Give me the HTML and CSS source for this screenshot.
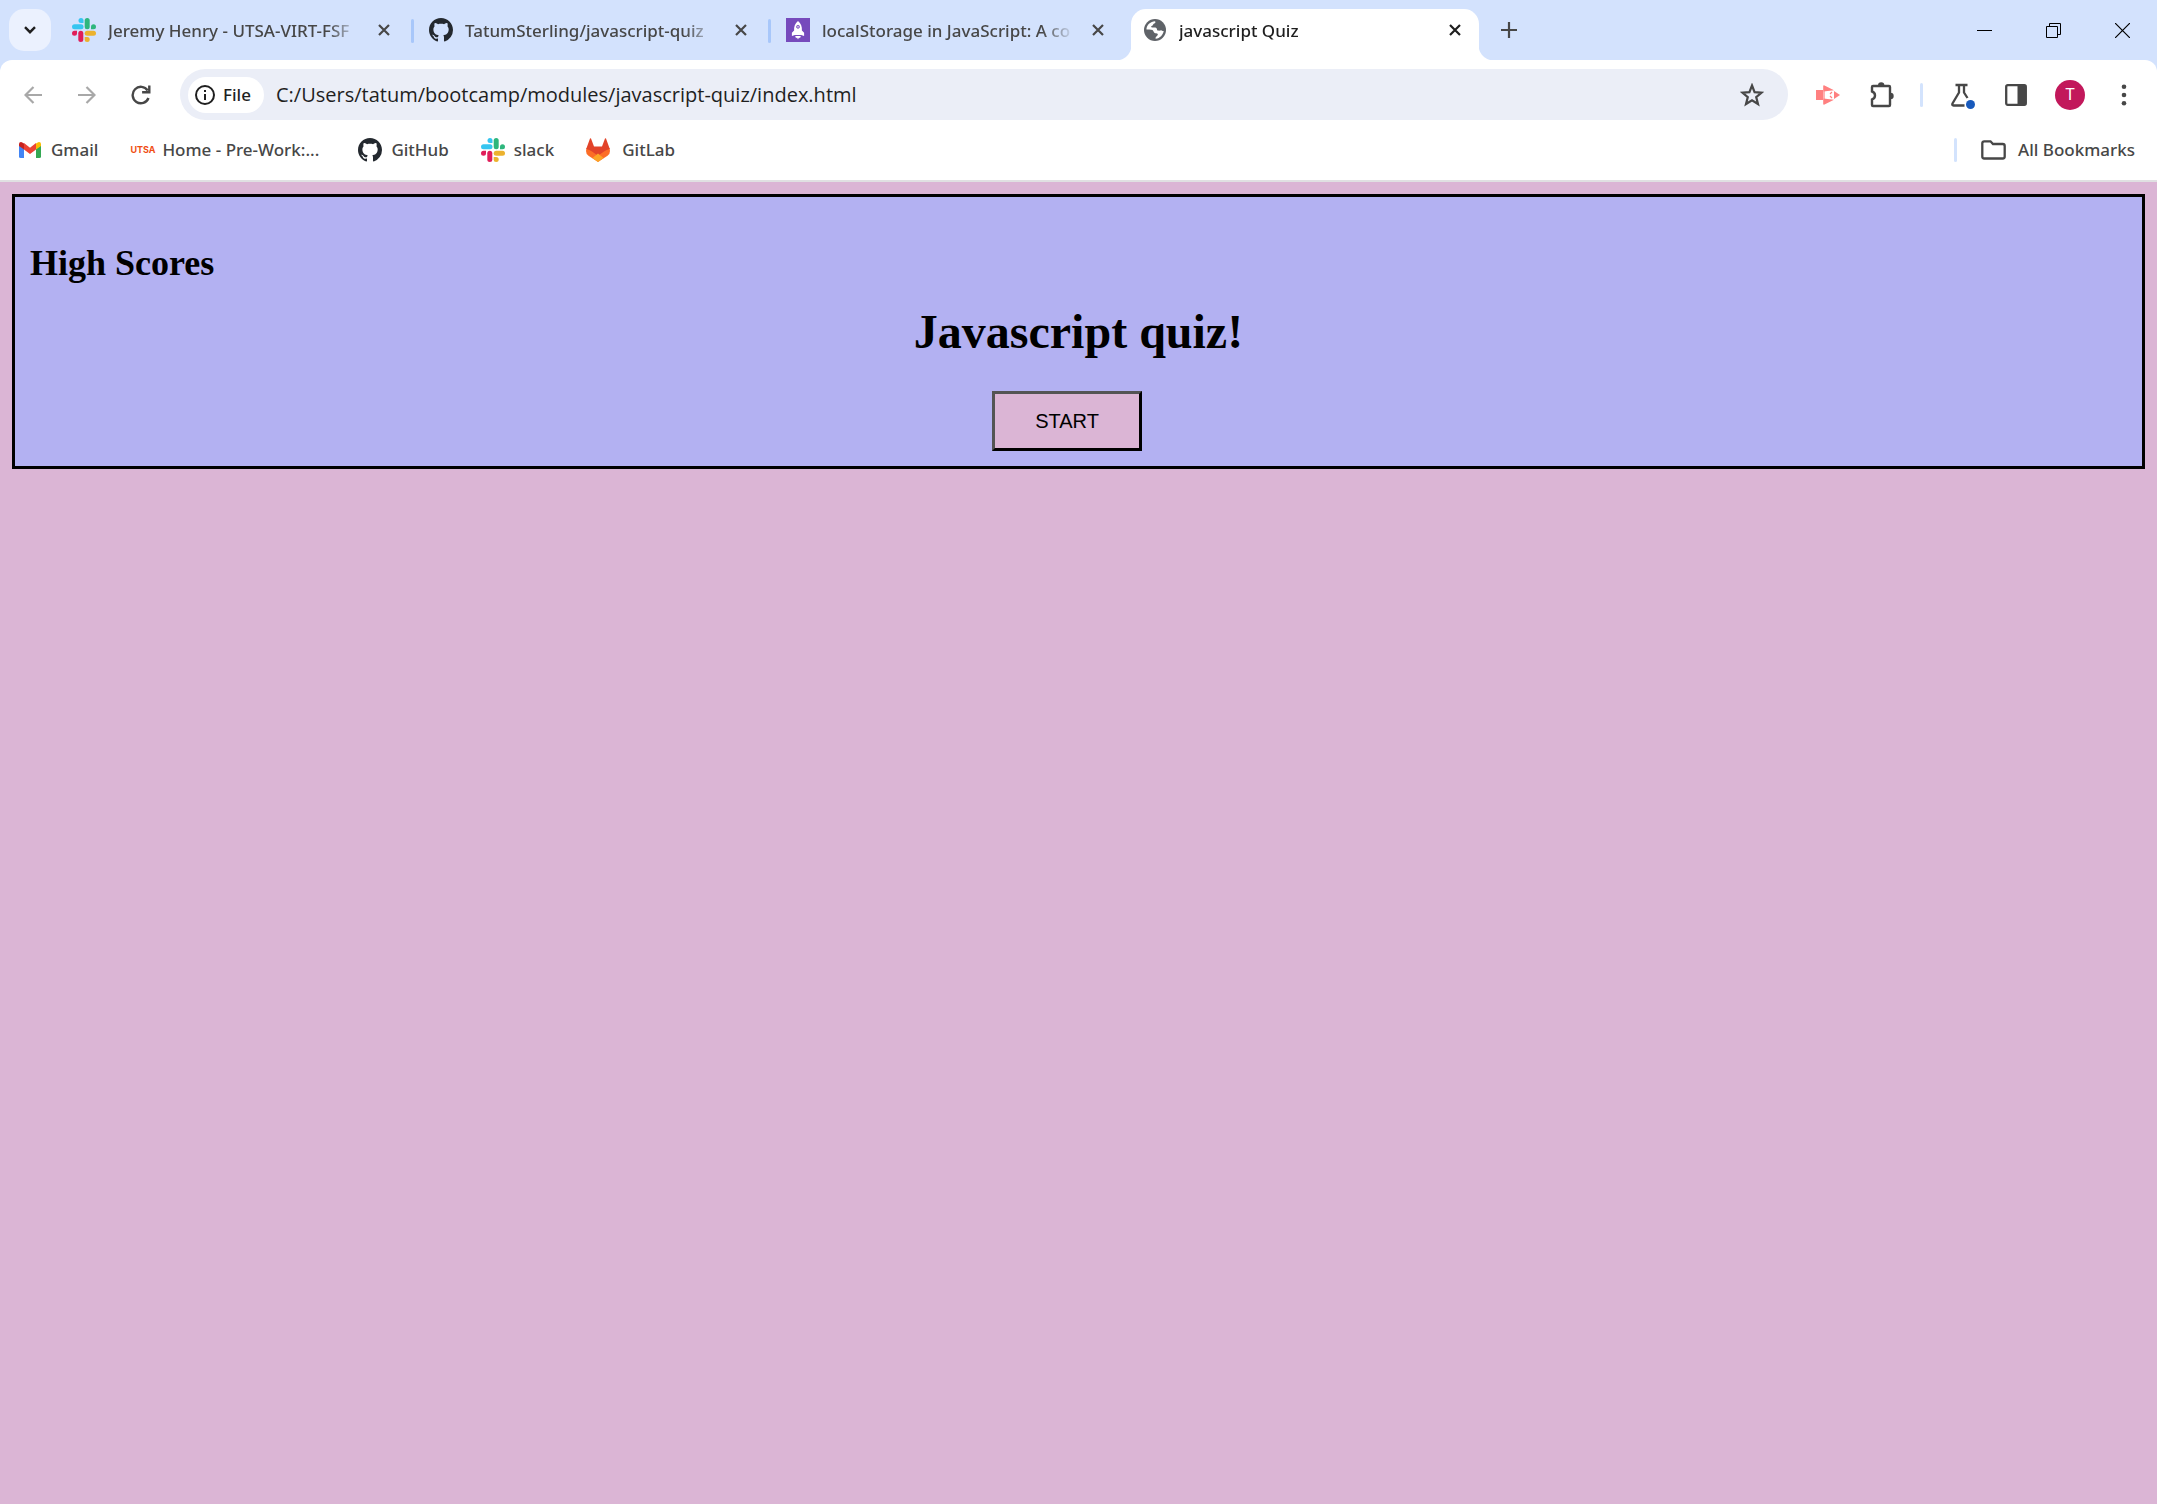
FILE: index.html
```html
<!DOCTYPE html>
<html lang="en">
<head>
<meta charset="utf-8">
<title>javascript Quiz</title>
<link rel="stylesheet" href="styles.css">
</head>
<body>
<svg class="defs" aria-hidden="true">
  <symbol id="close" viewBox="0 0 12 12"><path d="M1 1l10 10M11 1L1 11" fill="none" stroke="currentColor" stroke-width="2.2"/></symbol>
  <symbol id="slack" viewBox="0 0 24 24">
    <g fill="#36c5f0"><path d="M9 0a2.500 2.500 0 0 1 2.500 2.500V5H9a2.500 2.500 0 0 1 0-5z"/><rect x="0" y="6.300" width="11.500" height="5" rx="2.500"/></g>
    <g fill="#2eb67d"><rect x="12.700" y="0" width="5" height="11.300" rx="2.500"/><path d="M24 8.800a2.500 2.500 0 0 1-2.500 2.500H19V8.800a2.500 2.500 0 0 1 5 0z"/></g>
    <g fill="#ecb22e"><rect x="12.700" y="12.700" width="11.300" height="5" rx="2.500"/><path d="M15.200 24a2.500 2.500 0 0 1-2.500-2.500V19h2.500a2.500 2.500 0 0 1 0 5z"/></g>
    <g fill="#e01e5a"><rect x="6.300" y="12.700" width="5" height="11.300" rx="2.500"/><path d="M0 15.200a2.500 2.500 0 0 1 2.500-2.500H5v2.500a2.500 2.500 0 0 1-5 0z"/></g>
  </symbol>
  <symbol id="github" viewBox="0 0 16 16"><path fill="#24292f" d="M8 0C3.580 0 0 3.580 0 8c0 3.540 2.290 6.530 5.470 7.590.4.070.55-.17.55-.38 0-.19-.01-.82-.01-1.490-2.010.37-2.530-.49-2.690-.94-.09-.23-.48-.94-.82-1.130-.28-.15-.68-.52-.01-.53.63-.01 1.080.58 1.230.82.72 1.210 1.870.87 2.330.66.07-.52.28-.87.51-1.070-1.780-.2-3.640-.89-3.640-3.950 0-.87.31-1.590.82-2.150-.08-.2-.36-1.020.08-2.120 0 0 .67-.21 2.200.82.64-.18 1.320-.27 2-.27s1.360.09 2 .27c1.530-1.040 2.200-.82 2.200-.82.44 1.100.16 1.920.08 2.120.51.56.82 1.270.82 2.150 0 3.070-1.870 3.750-3.650 3.950.29.25.54.73.54 1.480 0 1.070-.01 1.930-.01 2.200 0 .21.15.46.55.38A8.010 8.010 0 0 0 16 8c0-4.420-3.580-8-8-8z"/></symbol>
</svg>

<header class="browser">
  <div class="tabstrip">
    <button class="tab-search" aria-label="Search tabs"><svg width="12" height="8" viewBox="0 0 12 8"><path d="M1 1.200l5 5 5-5" fill="none" stroke="#1f1f1f" stroke-width="2.400"/></svg></button>
    <nav class="tabs" aria-label="Tabs">
      <div class="tab">
        <svg class="favicon"><use href="#slack"/></svg>
        <a class="tab-title" href="#">Jeremy Henry - UTSA-VIRT-FSF</a>
        <button class="tab-close" aria-label="Close tab"><svg width="12" height="12"><use href="#close"/></svg></button>
      </div>
      <div class="tab divided">
        <svg class="favicon"><use href="#github"/></svg>
        <a class="tab-title" href="#">TatumSterling/javascript-quiz</a>
        <button class="tab-close" aria-label="Close tab"><svg width="12" height="12"><use href="#close"/></svg></button>
      </div>
      <div class="tab divided">
        <svg class="favicon" viewBox="0 0 24 24"><path fill="#764abc" d="M0 0h24v24H0z"/><path fill="#fff" d="M12 3c3 2.500 4.200 5.500 3.900 9.500l2.200 2.300v3.200l-3-1.100H8.900L5.900 18v-3.200l2.200-2.300C7.800 8.500 9 5.500 12 3zM9.200 18h5.600L14 20.200l-1-.8-1 2-1-2-1 .8z"/><circle cx="12" cy="8.800" r="1.500" fill="#c3aee3" stroke="#764abc" stroke-width=".8"/></svg>
        <a class="tab-title" href="#">localStorage in JavaScript: A co</a>
        <button class="tab-close" aria-label="Close tab"><svg width="12" height="12"><use href="#close"/></svg></button>
      </div>
      <div class="tab active">
        <svg class="favicon" viewBox="0 0 24 24"><circle cx="12" cy="12" r="11" fill="#5f6368"/><path fill="#fff" d="M3.500 10.500C4.200 6.500 7.500 3.500 12 3.200c1 .9.300 1.900-.9 2.300-1.300.5-.5 1.700-2 2.200-1.400.5-1.300 1.700.2 1.800 2 .1 3.600-.6 4.400.9.500 1.100.2 1.900 1.500 2.200 1.500.3 2.300-.4 3.300-.2 1.200.2 1.500.9 2.200.6C20 17 17 20.200 12.800 20.800c-.6-.9-.2-1.500.4-2.100 1-.9 1.700-1.200 1.600-2.400-.1-1-1.300-.9-2.600-1-1.500-.1-1.300-2.200-2.700-3.200-1.500-1-4-.6-6-.6z"/></svg>
        <a class="tab-title" href="#">javascript Quiz</a>
        <button class="tab-close" aria-label="Close tab"><svg width="12" height="12"><use href="#close"/></svg></button>
      </div>
    </nav>
    <button class="icon-button" aria-label="New tab"><svg width="16" height="16" viewBox="0 0 16 16"><path d="M8 0v16M0 8h16" stroke="#474747" stroke-width="2.200"/></svg></button>
    <div class="window-controls">
      <button aria-label="Minimize"><svg width="15" height="15"><path d="M0 7h15v1H0z"/></svg></button>
      <button aria-label="Restore"><svg width="15" height="15" fill="none" stroke="#000"><path d="M.5 3.500h11v11H.5zM3.500 3.500v-3h11v11h-3"/></svg></button>
      <button aria-label="Close"><svg width="15" height="15"><path d="M0 0l15 15M15 0L0 15" stroke="#000" stroke-width="1.200"/></svg></button>
    </div>
  </div>

  <div class="toolbar">
    <button class="icon-button" aria-label="Back"><svg width="18" height="18" viewBox="0 0 18 18" fill="none" stroke="#a8a8a8" stroke-width="2.200"><path d="M18 9H2M9.500 1L1.500 9l8 8"/></svg></button>
    <button class="icon-button" aria-label="Forward"><svg width="18" height="18" viewBox="0 0 18 18" fill="none" stroke="#a8a8a8" stroke-width="2.200"><path d="M0 9h16M8.500 1l8 8-8 8"/></svg></button>
    <button class="icon-button" aria-label="Reload"><svg width="20" height="20" viewBox="0 0 20 20" fill="none" stroke="#474747" stroke-width="2.400"><path d="M17.500 13a8.200 8.200 0 1 1-.8-7.500M18.300 .5v6.800h-7.200"/></svg></button>
    <div class="address">
      <button class="chip"><svg width="20" height="20" viewBox="0 0 20 20"><circle cx="10" cy="10" r="9" fill="none" stroke="#1f1f1f" stroke-width="2"/><path fill="#1f1f1f" d="M9 9h2v6H9zM9 5h2v2H9z"/></svg><span>File</span></button>
      <input class="url" type="text" aria-label="Address" value="C:/Users/tatum/bootcamp/modules/javascript-quiz/index.html">
      <button class="icon-button" aria-label="Bookmark this page"><svg width="24" height="24" viewBox="0 0 24 24"><path d="M12 2.500l2.600 6.600 7 .5-5.400 4.500 1.800 6.900-6-3.800-6 3.800 1.800-6.900L2.400 9.600l7-.5z" fill="none" stroke="#474747" stroke-width="2.200"/></svg></button>
    </div>
    <button class="icon-button" aria-label="Screen recorder"><svg width="26" height="20" viewBox="-2 0 26 20"><path fill="#ff8080" d="M0 5h7v10H0zM7.500 0L18 5.200 7.500 6.500zM7.500 20L18 14.800 7.500 13.500zM18 6l6 4-6 4z"/><path d="M8 1v18M16 7l-2 2M16 13l-2-2" stroke="#ff8080" stroke-width="1.200"/></svg></button>
    <button class="icon-button" aria-label="Extensions"><svg width="26" height="26" viewBox="0 0 26 26"><path d="M5 4h16q1 0 1 1v18q0 1-1 1H5q-1 0-1-1v-5.500q3-1 3-4T4 9.500V5q0-1 1-1z" fill="none" stroke="#474747" stroke-width="2.400"/><path fill="#474747" d="M10 3.500a3.200 3.200 0 0 1 6.400 0zM22.500 10.800a3.200 3.200 0 0 1 0 6.400z"/></svg></button>
    <span class="divider"></span>
    <button class="icon-button" aria-label="Labs"><svg width="26" height="26" viewBox="0 0 26 26"><path d="M6.500 3h12M10 3v7.500L3.500 21.500q-.8 2 1 2h11M15 3v7.500l3.500 5.500" fill="none" stroke="#474747" stroke-width="2.300"/><circle cx="21" cy="22" r="5" fill="#fff"/></svg><span class="dot"></span></button>
    <button class="icon-button" aria-label="Side panel"><svg width="22" height="22" viewBox="0 0 22 22"><rect x="1.200" y="1.200" width="19.600" height="19.600" rx="1.500" fill="none" stroke="#474747" stroke-width="2.300"/><path fill="#474747" d="M12.500 1h8.500v20h-8.500z"/></svg></button>
    <button class="icon-button" aria-label="Profile"><span class="avatar">T</span></button>
    <button class="icon-button" aria-label="Menu"><svg width="6" height="22" viewBox="0 0 6 22" fill="#474747"><circle cx="3" cy="2.700" r="2.300"/><circle cx="3" cy="11" r="2.300"/><circle cx="3" cy="19.300" r="2.300"/></svg></button>
  </div>

  <nav class="bookmarks" aria-label="Bookmarks">
    <a href="#"><svg width="24" height="24" viewBox="0 0 24 24"><path fill="#4285f4" d="M1 7l5 4v9H2.500Q1 20 1 18.500z"/><path fill="#34a853" d="M23 7l-5 4v9h3.500q1.500 0 1.500-1.500z"/><path fill="#ea4335" d="M6 5l6 4.800L18 5v6.500l-6 4.500-6-4.500z"/><path fill="#c5221f" d="M1 8V6q0-2 2-2 1 0 3 1.500v6z"/><path fill="#fbbc04" d="M23 8V6q0-2-2-2-1 0-3 1.500v6z"/></svg>Gmail</a>
    <a class="course" href="#"><span class="utsa">UTSA</span>Home - Pre-Work:...</a>
    <a href="#"><svg width="24" height="24"><use href="#github"/></svg>GitHub</a>
    <a href="#"><svg width="24" height="24"><use href="#slack"/></svg>slack</a>
    <a class="wide" href="#"><svg width="24" height="24" viewBox="0 0 24 24"><path fill="#fc6d26" d="M.5 10L0 13q0 3 2.500 4.800L12 24l9.500-6.200Q24 16 24 13l-.5-3z"/><path fill="#e24329" d="M4 .5q.5-.7 1 0L8 8.500h8l3-8q.5-.7 1 0L23.800 11q-3.300.5-5.800 2.500l-6 4.300-6-4.300Q3.500 11.500.2 11z"/><path fill="#fca326" d="M12 15.500l5.500 4.500L12 24l-5.500-4z"/></svg>GitLab</a>
    <span class="divider last"></span>
    <a class="wide" href="#"><svg width="25" height="20" viewBox="0 0 25 20"><path d="M1.300 3v13.500q0 2 2 2h18.400q2 0 2-2V6q0-2-2-2H12L9.500 1.300H3.300q-2 0-2 2z" fill="none" stroke="#474747" stroke-width="2.300"/></svg>All Bookmarks</a>
  </nav>
</header>

<main class="page">
  <section class="quiz">
    <h2>High Scores</h2>
    <h1>Javascript quiz!</h1>
    <div class="actions"><button class="start">START</button></div>
  </section>
</main>
</body>
</html>
```
FILE: styles.css
```css
* { box-sizing: border-box; }

body {
  margin: 0;
  min-height: 100vh;
  background: #dbb5d5;
}

button {
  padding: 0;
  border: 0;
  background: none;
  font: inherit;
  color: inherit;
}

a { color: inherit; text-decoration: none; }
svg { display: block; flex: none; }
.defs { position: absolute; width: 0; height: 0; }

.browser {
  background: #d3e2fd;
  border-bottom: 2px solid #e0e0e2;
  font: 500 17px/24px "Noto Sans", "Open Sans", sans-serif;
  color: #474747;
}

/* Tab strip */
.tabstrip { display: flex; height: 60px; align-items: center; }

.tab-search {
  display: grid;
  place-items: center;
  width: 42px;
  height: 42px;
  margin: 0 3px 0 9px;
  border-radius: 15px;
  background: #ebf1fe;
}

.tabs { display: flex; align-self: stretch; }

.tab {
  position: relative;
  display: flex;
  align-items: center;
  width: 357px;
  padding-left: 18px;
}

.favicon { width: 24px; height: 24px; margin-right: 12px; z-index: 1; }

.tab-title {
  width: 252px;
  padding-top: 2px;
  overflow: hidden;
  white-space: nowrap;
  z-index: 1;
  mask-image: linear-gradient(to right, #000 220px, transparent);
}

.tab-close {
  display: grid;
  place-items: center;
  width: 24px;
  height: 24px;
  margin-left: 12px;
  z-index: 1;
}

.divided::before {
  content: "";
  position: absolute;
  left: 0;
  top: 19px;
  width: 3px;
  height: 24px;
  border-radius: 2px;
  background: #a8c7fa;
}

.active { color: #1f1f1f; }
.active::before {
  content: "";
  position: absolute;
  inset: 9px 3px 0 6px;
  border-radius: 15px 15px 0 0;
  background: #fff;
}
.active::after {
  content: "";
  position: absolute;
  inset: auto -12px 0 -9px;
  height: 15px;
  background:
    radial-gradient(circle at 0 0, transparent 15px, #fff 16px) left / 15px 15px no-repeat,
    radial-gradient(circle at 100% 0, transparent 15px, #fff 16px) right / 15px 15px no-repeat;
}

.icon-button {
  position: relative;
  display: grid;
  place-items: center;
  flex: none;
  width: 54px;
  height: 48px;
}

.window-controls { display: flex; margin-left: auto; }
.window-controls button {
  display: grid;
  place-items: center;
  width: 69px;
  height: 48px;
}

/* Toolbar */
.toolbar {
  display: flex;
  align-items: center;
  height: 69px;
  padding: 0 6px;
  border-radius: 12px 12px 0 0;
  background: #fff;
}

.address {
  display: flex;
  align-items: center;
  flex: 1;
  height: 51px;
  margin: 0 12px;
  padding: 0 9px 0 8px;
  border-radius: 26px;
  background: #ebeef7;
}

.chip {
  display: flex;
  align-items: center;
  gap: 8px;
  width: 76px;
  height: 36px;
  padding-left: 7px;
  border-radius: 18px;
  background: #fff;
  color: #1f1f1f;
}

.url {
  flex: 1;
  min-width: 0;
  margin-left: 12px;
  padding: 0;
  border: 0;
  outline: 0;
  background: none;
  font: 20px/28px "Open Sans", "Noto Sans", sans-serif;
  color: #1f1f1f;
}

.divider {
  flex: none;
  width: 3px;
  height: 24px;
  margin: 0 12px;
  border-radius: 2px;
  background: #d3e3fd;
}

.dot {
  position: absolute;
  right: 14px;
  bottom: 10px;
  width: 9px;
  height: 9px;
  border-radius: 50%;
  background: #185abc;
}

.avatar {
  width: 30px;
  height: 30px;
  border-radius: 50%;
  background: #c2185b;
  font: 16px/30px Roboto, sans-serif;
  text-align: center;
  color: #fff;
}

/* Bookmarks bar */
.bookmarks {
  display: flex;
  align-items: center;
  gap: 32px;
  height: 51px;
  padding: 0 22px 10px 18px;
  background: #fff;
}
.bookmarks a { display: flex; align-items: center; gap: 9px; }
.bookmarks .wide { gap: 12px; }
.bookmarks .course { min-width: 196px; gap: 8px; }
.bookmarks .last { margin: 0 -8px 0 auto; }

.utsa {
  width: 24px;
  font: 700 9px/24px Inter, Arial, sans-serif;
  text-align: center;
  color: #f04e14;
}

/* Quiz page */
.page { padding: 12px; font-family: "Liberation Serif", "Times New Roman", serif; }

.quiz {
  padding: 15px;
  border: 3px solid #000;
  background: #b3b1f2;
  color: #000;
}
.quiz h2 { margin: 30px 0 20px; font-size: 36px; line-height: 42px; }
.quiz h1 { margin: 0 0 32px; font-size: 48px; line-height: 55px; text-align: center; }

.actions { display: flex; justify-content: center; padding-right: 23px; }

.start {
  width: 150px;
  height: 60px;
  border: 3px outset #000;
  background: #dbb5d5;
  font: 20px "Liberation Sans", Arial, sans-serif;
  color: #000;
}
```
